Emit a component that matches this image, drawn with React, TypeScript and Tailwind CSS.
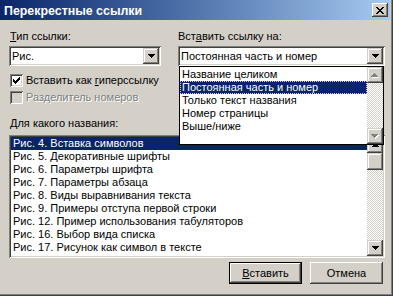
import React from "react";

type R = [number, number, number, number];

function Pix({ w, h, pts, color }: { w: number; h: number; pts: R[]; color: string }) {
  return (
    <svg width={w} height={h} viewBox={`0 0 ${w} ${h}`} shapeRendering="crispEdges" className="block">
      {pts.map(([x, y, ww, hh], i) => (
        <rect key={i} x={x} y={y} width={ww} height={hh} fill={color} />
      ))}
    </svg>
  );
}

const DOWN: R[] = [
  [0, 0, 7, 1],
  [1, 1, 5, 1],
  [2, 2, 3, 1],
  [3, 3, 1, 1],
];
const UP: R[] = [
  [3, 0, 1, 1],
  [2, 1, 3, 1],
  [1, 2, 5, 1],
  [0, 3, 7, 1],
];

function Arrow({ dir, disabled }: { dir: "up" | "down"; disabled?: boolean }) {
  const pts = dir === "up" ? UP : DOWN;
  if (!disabled) return <Pix w={7} h={4} pts={pts} color="#000000" />;
  const shifted: R[] = pts.map(([x, y, w, h]) => [x + 1, y + 1, w, h]);
  return (
    <svg width={8} height={5} viewBox="0 0 8 5" shapeRendering="crispEdges" className="block">
      {shifted.map(([x, y, w, h], i) => (
        <rect key={"s" + i} x={x} y={y} width={w} height={h} fill="#ffffff" />
      ))}
      {pts.map(([x, y, w, h], i) => (
        <rect key={i} x={x} y={y} width={w} height={h} fill="#808080" />
      ))}
    </svg>
  );
}

const RAISED =
  "shadow-[inset_-1px_-1px_0_#404040,inset_1px_1px_0_#d4d0c8,inset_-2px_-2px_0_#808080,inset_2px_2px_0_#ffffff]";
const BUTTON =
  "shadow-[inset_-1px_-1px_0_#404040,inset_1px_1px_0_#ffffff,inset_-2px_-2px_0_#808080,inset_2px_2px_0_#d4d0c8]";
const SUNKEN =
  "shadow-[inset_1px_1px_0_#808080,inset_-1px_-1px_0_#ffffff,inset_2px_2px_0_#404040,inset_-2px_-2px_0_#d4d0c8]";
const TRACK =
  "bg-[conic-gradient(#d4d0c8_25%,#ffffff_0_50%,#d4d0c8_0_75%,#ffffff_0)] bg-[length:2px_2px]";

function ScrollBtn({ dir, disabled }: { dir: "up" | "down"; disabled?: boolean }) {
  return (
    <div className={`w-[16px] h-[16px] bg-[#d4d0c8] ${RAISED} flex items-center justify-center shrink-0`}>
      <Arrow dir={dir} disabled={disabled} />
    </div>
  );
}

function Combo({ value }: { value: string }) {
  return (
    <div className={`h-[20px] bg-white ${SUNKEN} flex items-center p-[2px]`}>
      <span className="flex-1 pl-[1px] whitespace-nowrap overflow-hidden">{value}</span>
      <div className={`w-[16px] h-[16px] bg-[#d4d0c8] ${RAISED} flex items-center justify-center`}>
        <Arrow dir="down" />
      </div>
    </div>
  );
}

const CHECK: R[] = [
  [3, 5, 1, 3],
  [4, 6, 1, 3],
  [5, 7, 1, 3],
  [6, 6, 1, 3],
  [7, 5, 1, 3],
  [8, 4, 1, 3],
  [9, 3, 1, 3],
];

const CLOSE: R[] = [
  [0, 0, 2, 1],
  [6, 0, 2, 1],
  [1, 1, 2, 1],
  [5, 1, 2, 1],
  [2, 2, 4, 1],
  [3, 3, 2, 1],
  [2, 4, 4, 1],
  [1, 5, 2, 1],
  [5, 5, 2, 1],
  [0, 6, 2, 1],
  [6, 6, 2, 1],
];

const dropItems = [
  "Название целиком",
  "Постоянная часть и номер",
  "Только текст названия",
  "Номер страницы",
  "Выше/ниже",
];

const listItems = [
  "Рис. 4. Вставка символов",
  "Рис. 5. Декоративные шрифты",
  "Рис. 6. Параметры шрифта",
  "Рис. 7. Параметры абзаца",
  "Рис. 8. Виды выравнивания текста",
  "Рис. 9. Примеры отступа первой строки",
  "Рис. 12. Пример использования табуляторов",
  "Рис. 16. Выбор вида списка",
  "Рис. 17. Рисунок как символ в тексте",
];

export default function App() {
  return (
    <div className="w-[393px] h-[296px] bg-[#d4d0c8] flex flex-col font-['Liberation_Sans',Arial,sans-serif] text-[11px] leading-[13px] text-black shadow-[inset_-1px_-1px_0_#404040,inset_-2px_-2px_0_#808080] overflow-hidden select-none">
      {/* Title bar */}
      <div className="h-[20px] w-[390px] shrink-0 bg-gradient-to-r from-[#0a246a] to-[#a6caf0] flex items-center justify-between pl-[4px] pr-[2px]">
        <span className="text-white font-bold text-[12.4px] leading-[14px] mt-[2px]">Перекрестные ссылки</span>
        <div className={`w-[16px] h-[14px] bg-[#d4d0c8] ${BUTTON} flex items-center justify-center`}>
          <Pix w={8} h={7} pts={CLOSE} color="#000000" />
        </div>
      </div>

      <div className="flex flex-col pl-[9px] pt-[10px] w-[390px]">
        <div className="grid grid-cols-[152px_207px] gap-x-[17px]">
          <div className="pl-[1px] h-[13px]">
            <span className="underline">Т</span>ип ссылки:
          </div>
          <div className="h-[13px]">
            Вст<span className="underline">а</span>вить ссылку на:
          </div>
          <div className="mt-[3px]">
            <Combo value="Рис." />
          </div>
          <div className="mt-[3px] relative">
            <Combo value="Постоянная часть и номер" />
            <div className="absolute left-[1px] top-full w-[205px] h-[79px] bg-white border border-black flex z-10">
              <div className="flex-1 flex flex-col pt-[1px]">
                {dropItems.map((t, i) => (
                  <div
                    key={t}
                    className={
                      i === 1
                        ? "h-[13px] pl-[2px] whitespace-nowrap bg-[#0a246a] text-white outline-1 outline-dotted outline-[#e8d088] -outline-offset-1"
                        : "h-[13px] pl-[2px] whitespace-nowrap"
                    }
                  >
                    {t}
                  </div>
                ))}
              </div>
              <div className="w-[16px] flex flex-col">
                <ScrollBtn dir="up" disabled />
                <div className={`flex-1 ${TRACK}`} />
                <ScrollBtn dir="down" disabled />
              </div>
            </div>
          </div>
        </div>

        <div className="flex items-center h-[13px] mt-[8px] pl-[1px]">
          <div className={`w-[13px] h-[13px] bg-white ${SUNKEN} relative`}>
            <div className="absolute inset-0">
              <Pix w={13} h={13} pts={CHECK} color="#000000" />
            </div>
          </div>
          <span className="ml-[3px] whitespace-nowrap">
            Вставить как <span className="underline">г</span>иперссылку
          </span>
        </div>
        <div className="flex items-center h-[13px] mt-[4px] pl-[1px]">
          <div className={`w-[13px] h-[13px] bg-[#d4d0c8] ${SUNKEN}`} />
          <span className="ml-[3px] whitespace-nowrap text-[#808080] [text-shadow:1px_1px_0_#ffffff]">
            Разделитель номеров
          </span>
        </div>

        <div className="h-[13px] mt-[13px] pl-[1px]">
          <span className="underline">Д</span>ля какого названия:
        </div>

        <div className={`mt-[5px] w-[376px] h-[123px] bg-white ${SUNKEN} p-[2px] flex`}>
          <div className="flex-1 flex flex-col overflow-hidden">
            {listItems.map((t, i) => (
              <div
                key={t}
                className={
                  i === 0
                    ? "h-[13px] pl-[2px] whitespace-nowrap bg-[#0a246a] text-white"
                    : "h-[13px] pl-[2px] whitespace-nowrap"
                }
              >
                {t}
              </div>
            ))}
          </div>
          <div className="w-[16px] flex flex-col">
            <ScrollBtn dir="up" />
            <div className={`w-[16px] h-[17px] bg-[#d4d0c8] ${RAISED}`} />
            <div className={`flex-1 ${TRACK}`} />
            <ScrollBtn dir="down" />
          </div>
        </div>

        <div className="mt-[4px] w-[376px] pr-[2px] flex justify-end gap-[8px]">
          <div className="w-[73px] h-[22px] border border-black">
            <div className={`w-full h-full bg-[#d4d0c8] ${BUTTON} flex items-center justify-center`}>
              <span>
                <span className="underline">В</span>ставить
              </span>
            </div>
          </div>
          <div className={`w-[73px] h-[22px] bg-[#d4d0c8] ${BUTTON} flex items-center justify-center`}>
            Отмена
          </div>
        </div>
      </div>
    </div>
  );
}
